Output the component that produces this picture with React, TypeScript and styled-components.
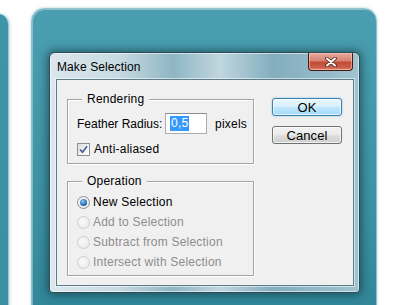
import React from "react";
import styled, { createGlobalStyle } from "styled-components";

const Global = createGlobalStyle`
  html, body { margin: 0; padding: 0; background: #ffffff; }
  body { font-family: "Liberation Sans", Arial, sans-serif; font-size: 12px; }
`;

const Desktop = styled.div`
  position: relative;
  width: 393px;
  height: 305px;
  overflow: hidden;
  background: #ffffff;
`;

const BackWindow = styled.div`
  position: absolute;
  left: -40px;
  top: 14px;
  width: 48px;
  height: 320px;
  border-radius: 10px;
  background: linear-gradient(180deg, #3f95a7 0%, #3a8ea0 100%);
  border-right: 1px solid #9fcdd7;
  box-shadow: 1px 0 3px rgba(120, 190, 205, 0.5);
`;

const MainWindow = styled.div`
  position: absolute;
  left: 31px;
  top: 8px;
  width: 346px;
  height: 320px;
  box-sizing: border-box;
  border-radius: 13px 13px 0 0;
  border: 1px solid #8fc4cf;
  background: linear-gradient(180deg, #4a9eaf 0%, #4499ab 30%, #3a8fa1 70%, #2f8496 100%);
  box-shadow: inset 1px 1px 0 rgba(255, 255, 255, 0.35), 0 0 3px rgba(60, 140, 160, 0.4);
`;

const Dialog = styled.div`
  position: absolute;
  left: 49px;
  top: 52px;
  width: 311px;
  height: 241px;
  box-sizing: border-box;
  display: flex;
  flex-direction: column;
  border: 1px solid #2f4b58;
  border-radius: 6px 6px 4px 4px;
  background:
    linear-gradient(90deg,
      rgba(222, 233, 238, 0.95) 0%,
      rgba(205, 221, 228, 0.9) 22%,
      rgba(140, 180, 194, 0.85) 40%,
      rgba(196, 216, 225, 0.9) 55%,
      rgba(128, 172, 188, 0.9) 72%,
      rgba(160, 196, 209, 0.9) 100%),
    #9fc2cf;
  box-shadow: 0 0 9px 2px rgba(10, 40, 50, 0.55), inset 0 0 0 1px rgba(255, 255, 255, 0.55);
`;

const TitleBar = styled.div`
  display: flex;
  align-items: flex-start;
  justify-content: space-between;
  height: 26px;
  padding-left: 7px;
  padding-right: 6px;
`;

const Title = styled.span`
  margin-top: 7px;
  font-size: 12px;
  line-height: 14px;
  letter-spacing: 0.1px;
  color: #000000;
`;

const CloseButton = styled.div`
  width: 45px;
  height: 18px;
  box-sizing: border-box;
  display: flex;
  align-items: center;
  justify-content: center;
  border: 1px solid #4b1a12;
  border-top: none;
  border-radius: 0 0 4px 4px;
  background: linear-gradient(180deg, #e9a99a 0%, #d78474 45%, #c34a34 55%, #c9604a 85%, #de8d7a 100%);
  box-shadow: inset 0 0 0 1px rgba(255, 210, 200, 0.5);
`;

const Content = styled.div`
  flex: 1;
  margin: 0 5px 6px 6px;
  box-sizing: border-box;
  border: 1px solid #5d7c89;
  background: #f0f0f0;
  display: flex;
  padding: 0 11px 0 10px;
  letter-spacing: 0.22px;
  box-shadow: 0 0 0 1px rgba(255, 255, 255, 0.55);
`;

const LeftColumn = styled.div`
  width: 187px;
  display: flex;
  flex-direction: column;
  padding-top: 19px;
`;

const RightColumn = styled.div`
  margin-left: 18px;
  width: 70px;
  display: flex;
  flex-direction: column;
  gap: 10px;
  padding-top: 18px;
`;

const Group = styled.div<{ $top: number }>`
  position: relative;
  margin-top: ${(p) => p.$top}px;
  border: 1px solid #a3a3a3;
  box-shadow: inset 1px 1px 0 #ffffff, 1px 1px 0 #ffffff;
  display: flex;
  flex-direction: column;
`;

const Legend = styled.span`
  position: absolute;
  left: 14px;
  top: -8px;
  padding: 0 5px;
  background: #f0f0f0;
  line-height: 14px;
  color: #000000;
`;

const FieldRow = styled.div`
  display: flex;
  align-items: center;
  height: 21px;
  margin: 13px 0 7px 9px;
`;

const FieldLabel = styled.span`
  width: 88px;
  color: #000000;
  white-space: nowrap;
  letter-spacing: 0;
`;

const Input = styled.div`
  width: 42px;
  height: 21px;
  box-sizing: border-box;
  border: 1px solid #abadb3;
  border-top-color: #8a8d94;
  background: #ffffff;
  display: flex;
  align-items: center;
  padding-left: 4px;
`;

const Selected = styled.span`
  background: #3399ff;
  color: #ffffff;
  line-height: 15px;
  padding: 0 1px;
`;

const Unit = styled.span`
  margin-left: 8px;
  color: #000000;
`;

const CheckRow = styled.div`
  display: flex;
  align-items: center;
  gap: 4px;
  height: 16px;
  margin: 0 0 6px 9px;
  color: #000000;
`;

const CheckBox = styled.div`
  width: 13px;
  height: 13px;
  box-sizing: border-box;
  border: 1px solid #8e8f8f;
  background: linear-gradient(135deg, #dcdcdc 0%, #f4f4f4 60%, #ffffff 100%);
  display: flex;
  align-items: center;
  justify-content: center;
`;

const RadioList = styled.div`
  display: flex;
  flex-direction: column;
  padding: 10px 0 3px 9px;
`;

const RadioRow = styled.div<{ $disabled?: boolean }>`
  display: flex;
  align-items: center;
  gap: 3px;
  height: 20px;
  color: ${(p) => (p.$disabled ? "#8d8d8d" : "#000000")};
`;

const RadioCircle = styled.div<{ $checked?: boolean; $disabled?: boolean }>`
  width: 13px;
  height: 13px;
  box-sizing: border-box;
  border-radius: 50%;
  border: 1px solid ${(p) => (p.$disabled ? "#cfcfcf" : "#8a8f94")};
  background: ${(p) =>
    p.$disabled
      ? "radial-gradient(circle at 40% 40%, #fafafa 0%, #ececec 70%, #e2e2e2 100%)"
      : "radial-gradient(circle at 40% 40%, #ffffff 0%, #e6e6e6 80%)"};
  display: flex;
  align-items: center;
  justify-content: center;
`;

const RadioDot = styled.div`
  width: 7px;
  height: 7px;
  border-radius: 50%;
  background: radial-gradient(circle at 40% 35%, #8fcaf0 0%, #2a74bd 55%, #173f78 100%);
`;

const Button = styled.div<{ $default?: boolean }>`
  height: 18px;
  box-sizing: border-box;
  display: flex;
  align-items: center;
  justify-content: center;
  border-radius: 3px;
  color: #000000;
  font-size: 13px;
  letter-spacing: 0.1px;
  border: 1px solid ${(p) => (p.$default ? "#3c7fb1" : "#707070")};
  background: ${(p) =>
    p.$default
      ? "linear-gradient(180deg, #eaf6fd 0%, #d9f0fc 45%, #bee6fd 55%, #a7d9f5 100%)"
      : "linear-gradient(180deg, #f2f2f2 0%, #ebebeb 45%, #dddddd 55%, #cfcfcf 100%)"};
  box-shadow: ${(p) =>
    p.$default
      ? "inset 0 0 0 1px rgba(255,255,255,0.7), 0 0 2px #6fc0ea"
      : "inset 0 0 0 1px rgba(255,255,255,0.7)"};
`;

const CloseGlyph = () => (
  <svg width="12" height="10" viewBox="0 0 12 10">
    <path d="M2 1.5 L10 8.5 M10 1.5 L2 8.5" stroke="#4a2018" strokeWidth="3.6" strokeLinecap="round" />
    <path d="M2 1.5 L10 8.5 M10 1.5 L2 8.5" stroke="#ffffff" strokeWidth="2" strokeLinecap="round" />
  </svg>
);

const CheckMark = () => (
  <svg width="9" height="9" viewBox="0 0 9 9">
    <path d="M1 4.5 L3.5 7.2 L8 1.2" stroke="#4a5f97" strokeWidth="1.7" fill="none" />
  </svg>
);

const operations = [
  { label: "New Selection", checked: true, disabled: false },
  { label: "Add to Selection", checked: false, disabled: true },
  { label: "Subtract from Selection", checked: false, disabled: true },
  { label: "Intersect with Selection", checked: false, disabled: true },
];

export default function App() {
  return (
    <>
      <Global />
      <Desktop>
        <BackWindow />
        <MainWindow />
        <Dialog>
          <TitleBar>
            <Title>Make Selection</Title>
            <CloseButton>
              <CloseGlyph />
            </CloseButton>
          </TitleBar>
          <Content>
            <LeftColumn>
              <Group $top={0}>
                <Legend>Rendering</Legend>
                <FieldRow>
                  <FieldLabel>Feather Radius:</FieldLabel>
                  <Input>
                    <Selected>0,5</Selected>
                  </Input>
                  <Unit>pixels</Unit>
                </FieldRow>
                <CheckRow>
                  <CheckBox>
                    <CheckMark />
                  </CheckBox>
                  <span>Anti-aliased</span>
                </CheckRow>
              </Group>
              <Group $top={17}>
                <Legend>Operation</Legend>
                <RadioList>
                  {operations.map((op) => (
                    <RadioRow key={op.label} $disabled={op.disabled}>
                      <RadioCircle $checked={op.checked} $disabled={op.disabled}>
                        {op.checked && <RadioDot />}
                      </RadioCircle>
                      <span>{op.label}</span>
                    </RadioRow>
                  ))}
                </RadioList>
              </Group>
            </LeftColumn>
            <RightColumn>
              <Button $default>OK</Button>
              <Button>Cancel</Button>
            </RightColumn>
          </Content>
        </Dialog>
      </Desktop>
    </>
  );
}
